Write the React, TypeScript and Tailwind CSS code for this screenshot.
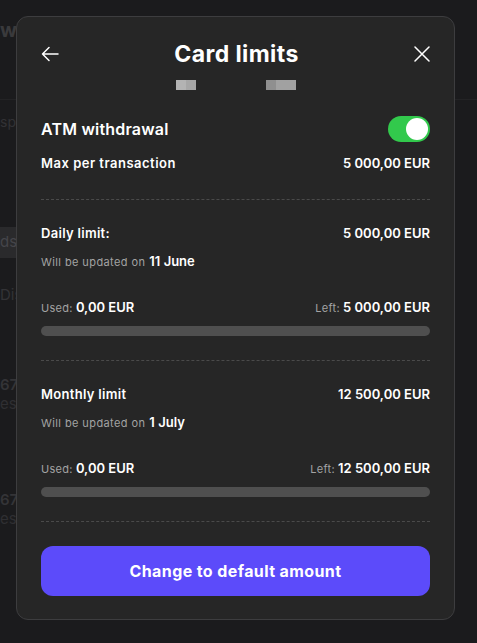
const font = { fontFamily: "Inter, 'Noto Sans', sans-serif" };

const Toggle = () => (
  <div className="flex h-[26px] w-[42px] items-center justify-end rounded-full bg-[#32c94c] p-[2px]">
    <div className="size-[22px] rounded-full bg-white" />
  </div>
);

const Dashed = () => <div className="border-t border-dashed border-[#4a4a4a]" />;

const LimitBlock = ({
  title,
  amount,
  date,
  left,
}: {
  title: string;
  amount: string;
  date: string;
  left: string;
}) => (
  <div>
    <div className="mt-[25px] flex h-[18px] items-center justify-between text-[13px] font-semibold text-white">
      <span className="tracking-[0.3px]">{title}</span>
      <span>{amount}</span>
    </div>
    <div className="mt-[10px] flex h-[18px] items-center text-[11px] tracking-[0.4px] text-[#a3a3a3]">
      Will be updated on
      <span className="ml-1 text-[13px] font-semibold tracking-normal text-white">{date}</span>
    </div>
    <div className="mt-7 flex h-[18px] items-center justify-between text-[11px] text-[#a3a3a3]">
      <span>
        <span className="tracking-[0.3px]">Used:</span>{" "}
        <span className="text-[13px] font-semibold text-white">0,00 EUR</span>
      </span>
      <span>
        <span className="tracking-[0.3px]">Left:</span>{" "}
        <span className="text-[13px] font-semibold text-white">{left}</span>
      </span>
    </div>
    <div className="mt-[9px] h-[10px] rounded-full bg-[#4f4f4f]" />
    <div className="mt-6">
      <Dashed />
    </div>
  </div>
);

// page behind the dialog, only its left edge shows
const Background = () => (
  <div className="flex w-[477px] flex-col text-[#3a3a3c]">
    <div className="h-[23px]" />
    <div className="h-[14px] text-[20px] font-bold leading-[14px]">w</div>
    <div className="h-[63px] border-b border-[#232325]" />
    <div className="flex h-[42px] items-center text-[14px] text-[#323235]">sp</div>
    <div className="h-[85px]" />
    <div className="flex h-[31px] w-[16px] items-center bg-[#2a2a2c] text-[15px] text-[#45454a]">ds</div>
    <div className="flex h-[74px] items-center text-[15px] text-[#333336]">Dis</div>
    <div className="h-[44px]" />
    <div className="flex h-[18px] items-center text-[15px] font-semibold text-[#343437]">67*</div>
    <div className="flex h-[20px] items-center text-[15px] text-[#2f2f32]">es</div>
    <div className="h-[77px]" />
    <div className="flex h-[18px] items-center text-[15px] font-semibold text-[#343437]">67*</div>
    <div className="flex h-[20px] items-center text-[15px] text-[#2f2f32]">es</div>
  </div>
);

export default function App() {
  return (
    <div className="relative h-[643px] w-[477px] overflow-hidden bg-[#1b1b1d]" style={font}>
      <Background />
      <div className="absolute left-4 top-4 flex h-[604px] w-[439px] flex-col rounded-xl border border-[#3d3d3f] bg-[#262626] px-6 pt-[25px]">
        <div className="flex h-6 items-center justify-between">
          <svg width="18" height="16" viewBox="0 0 18 16" fill="none" stroke="white" strokeWidth="1.5" strokeLinecap="round" strokeLinejoin="round">
            <path d="M17 8H1.5M8 1.5 1.5 8 8 14.5" />
          </svg>
          <h1 className="text-[23px] font-bold leading-6 tracking-[0.4px] text-white">Card limits</h1>
          <svg width="16" height="16" viewBox="0 0 16 16" fill="none" stroke="white" strokeWidth="1.5" strokeLinecap="round">
            <path d="M1 1l14 14M15 1 1 15" />
          </svg>
        </div>
        <div className="mt-[14px] flex justify-center gap-[70px]">
          <div className="flex h-[10px] w-5">
            <div className="w-[10px] bg-[#b3b3b3]" />
            <div className="w-[10px] bg-[#a6a6a6]" />
          </div>
          <div className="flex h-[10px] w-[30px]">
            <div className="w-[10px] bg-[#8f8f8f]" />
            <div className="w-[20px] bg-[#a1a1a1]" />
          </div>
        </div>
        <div className="mt-[26px] flex h-[26px] items-center justify-between">
          <span className="text-[16px] font-semibold tracking-[0.2px] text-white">ATM withdrawal</span>
          <Toggle />
        </div>
        <div className="mt-[13px] flex h-[18px] items-center justify-between text-[13px] font-semibold text-white">
          <span className="tracking-[0.5px]">Max per transaction</span>
          <span>5 000,00 EUR</span>
        </div>
        <div className="mt-[26px]">
          <Dashed />
        </div>
        <LimitBlock title="Daily limit:" amount="5 000,00 EUR" date="11 June" left="5 000,00 EUR" />
        <LimitBlock title="Monthly limit" amount="12 500,00 EUR" date="1 July" left="12 500,00 EUR" />
        <button className="mt-6 h-[50px] w-full rounded-xl bg-[#5c4bfa] text-[16px] font-bold tracking-[0.4px] text-white">
          Change to default amount
        </button>
      </div>
    </div>
  );
}
